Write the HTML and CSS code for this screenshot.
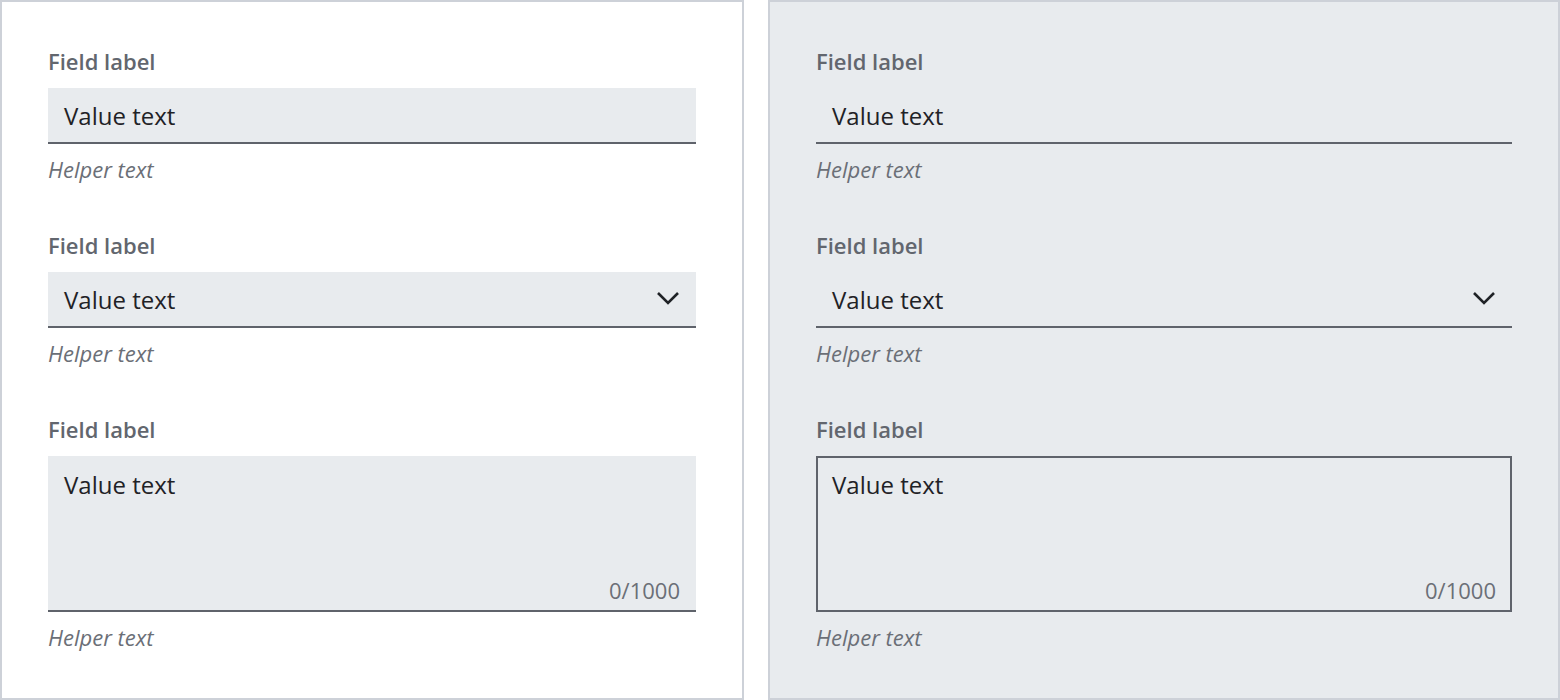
FILE: index.html
```html
<!DOCTYPE html>
<html>
<head>
<meta charset="utf-8">
<link rel="stylesheet" href="styles.css">
</head>
<body>
<div class="page">
  <section class="panel panel-light">
    <div class="field">
      <div class="label">Field label</div>
      <div class="control filled"><span class="value">Value text</span></div>
      <div class="helper">Helper text</div>
    </div>
    <div class="field">
      <div class="label">Field label</div>
      <div class="control filled select"><span class="value">Value text</span>
        <svg class="chev" width="24" height="14" viewBox="0 0 24 14"><path d="M2 2 L12 12 L22 2" fill="none" stroke="#1f2226" stroke-width="2.6"/></svg>
      </div>
      <div class="helper">Helper text</div>
    </div>
    <div class="field">
      <div class="label">Field label</div>
      <div class="control filled area"><span class="value">Value text</span><span class="count">0/1000</span></div>
      <div class="helper">Helper text</div>
    </div>
  </section>
  <section class="panel panel-dark">
    <div class="field">
      <div class="label">Field label</div>
      <div class="control line"><span class="value">Value text</span></div>
      <div class="helper">Helper text</div>
    </div>
    <div class="field">
      <div class="label">Field label</div>
      <div class="control line select"><span class="value">Value text</span>
        <svg class="chev" width="24" height="14" viewBox="0 0 24 14"><path d="M2 2 L12 12 L22 2" fill="none" stroke="#1f2226" stroke-width="2.6"/></svg>
      </div>
      <div class="helper">Helper text</div>
    </div>
    <div class="field">
      <div class="label">Field label</div>
      <div class="control boxed area"><span class="value">Value text</span><span class="count">0/1000</span></div>
      <div class="helper">Helper text</div>
    </div>
  </section>
</div>
</body>
</html>
```
FILE: styles.css
```css
html, body {
  margin: 0;
  padding: 0;
  background: #ffffff;
}
body {
  font-family: "Open Sans", "Noto Sans", sans-serif;
}
.page {
  display: flex;
  gap: 24px;
  width: 1560px;
  height: 700px;
}
.panel {
  box-sizing: border-box;
  height: 700px;
  border: 2px solid #cdd1d8;
  padding: 44px 46px 0;
  display: flex;
  flex-direction: column;
  gap: 46px;
}
.panel-light {
  width: 744px;
  background: #ffffff;
}
.panel-dark {
  flex: 1;
  background: #e8ebee;
}
.field {
  display: flex;
  flex-direction: column;
}
.label {
  font-size: 22px;
  font-weight: 600;
  color: #62666e;
  line-height: 30px;
  height: 30px;
  margin-bottom: 12px;
}
.control {
  box-sizing: border-box;
  height: 56px;
  display: flex;
  align-items: center;
  justify-content: space-between;
  padding: 2px 16px 0;
  border-bottom: 2px solid #5f636b;
  position: relative;
}
.filled {
  background: #e8ebee;
}
.value {
  font-size: 24px;
  color: #1f2226;
  line-height: 32px;
}
.chev {
  display: block;
  margin-top: -4px;
}
.area {
  height: 156px;
  align-items: flex-start;
  padding-top: 13px;
}
.boxed {
  border: 2px solid #5f636b;
  padding-left: 14px;
  padding-right: 14px;
  padding-top: 11px;
}
.count {
  position: absolute;
  right: 16px;
  bottom: 5px;
  font-size: 22px;
  color: #6b6f77;
  line-height: 30px;
}
.boxed .count {
  right: 14px;
  bottom: 5px;
}
.helper {
  margin-top: 10px;
  font-size: 22px;
  font-style: italic;
  color: #6b6f77;
  line-height: 30px;
}
```
